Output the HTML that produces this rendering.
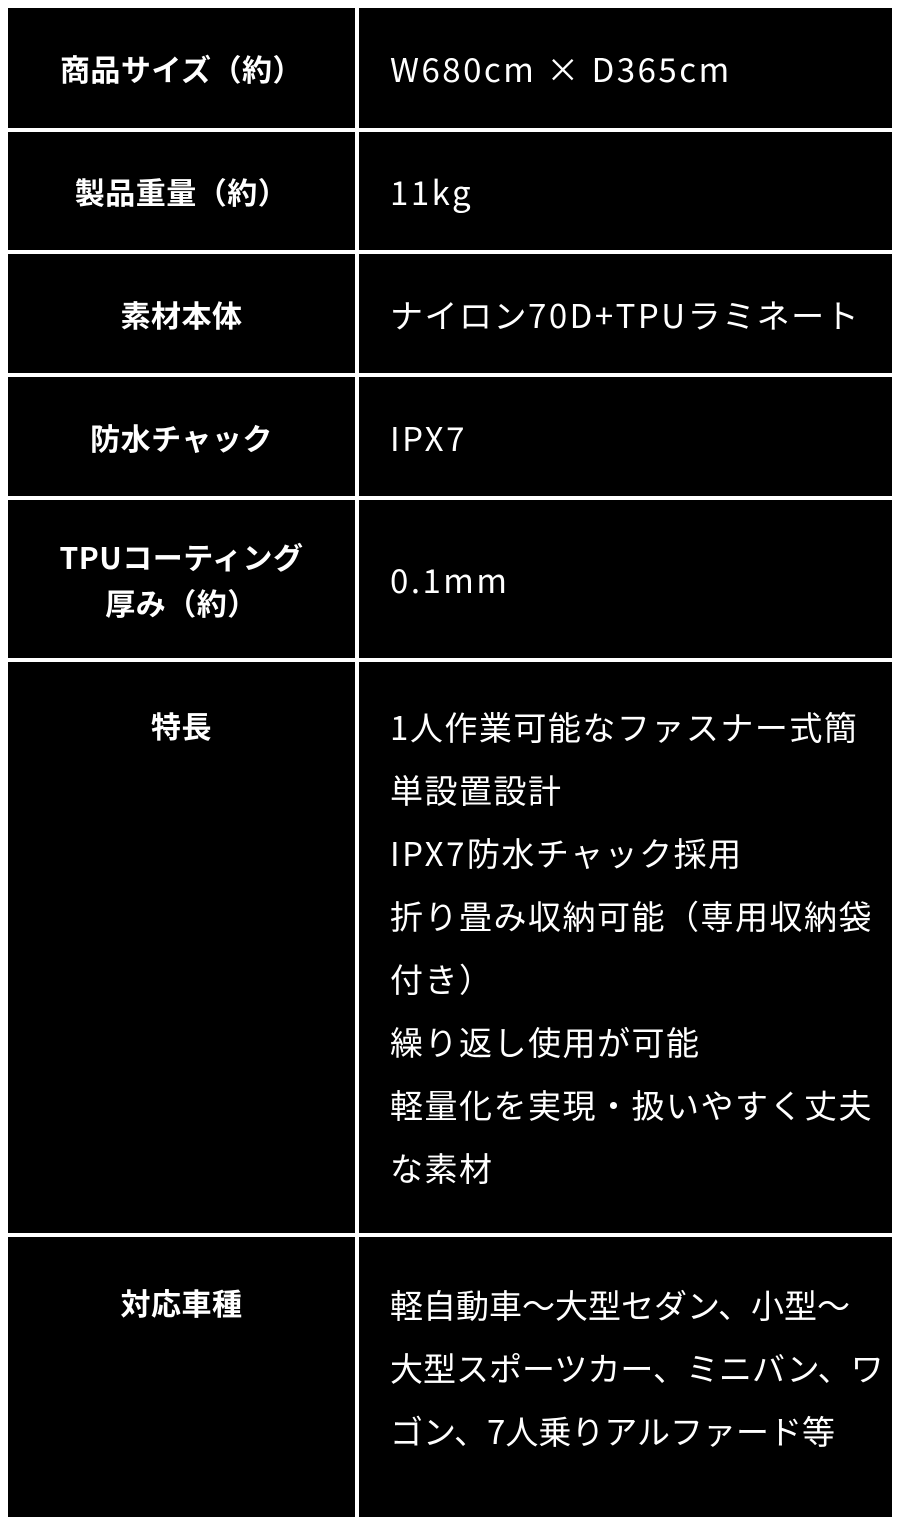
<!DOCTYPE html><html><head><meta charset="utf-8"><style>
body{margin:0;width:901px;height:1525px;background:#fff;position:relative;overflow:hidden;font-family:"Noto Sans CJK JP","Liberation Sans",sans-serif;color:#fff}
.c{position:absolute;background:#000}
.l{left:8px;width:347px;display:flex;align-items:center;justify-content:center;text-align:center;font-weight:bold;font-size:30px;line-height:46px;letter-spacing:0.5px}
.r{left:359px;width:533px;font-size:33px;box-sizing:border-box;padding-left:31px;display:flex;align-items:center;white-space:nowrap;letter-spacing:1.5px;overflow:hidden}
.t{align-items:flex-start}
.w{letter-spacing:2.5px}
</style></head><body>
<div class="c l" style="top:8px;height:120px">商品サイズ（約）</div><div class="c r" style="top:8px;height:120px"><div class="w">W680cm × D365cm</div></div>
<div class="c l" style="top:132px;height:118px">製品重量（約）</div><div class="c r" style="top:132px;height:118px"><div class="w">11kg</div></div>
<div class="c l" style="top:254px;height:119px">素材本体</div><div class="c r" style="top:254px;height:119px"><div>ナイロン<span class="w">70D+TPU</span>ラミネート</div></div>
<div class="c l" style="top:377px;height:119px">防水チャック</div><div class="c r" style="top:377px;height:119px"><div class="w">IPX7</div></div>
<div class="c l" style="top:500px;height:158px">TPUコーティング<br>厚み（約）</div><div class="c r" style="top:500px;height:158px"><div class="w">0.1mm</div></div>
<div class="c l t" style="top:662px;height:571px;padding-top:40px;box-sizing:border-box">特長</div>
<div class="c r t" style="top:662px;height:571px;padding-top:33px;line-height:63px"><div>1人作業可能なファスナー式簡<br>単設置設計<br><span class="w">IPX7</span>防水チャック採用<br>折り畳み収納可能（専用収納袋<br>付き）<br>繰り返し使用が可能<br>軽量化を実現・扱いやすく丈夫<br>な素材</div></div>
<div class="c l t" style="top:1237px;height:280px;padding-top:42px;box-sizing:border-box">対応車種</div>
<div class="c r t" style="top:1237px;height:280px;padding-top:36px;line-height:63px;letter-spacing:0"><div>軽自動車～大型セダン、小型～<br>大型スポーツカー、ミニバン、ワ<br>ゴン、7人乗りアルファード等</div></div>
</body></html>
